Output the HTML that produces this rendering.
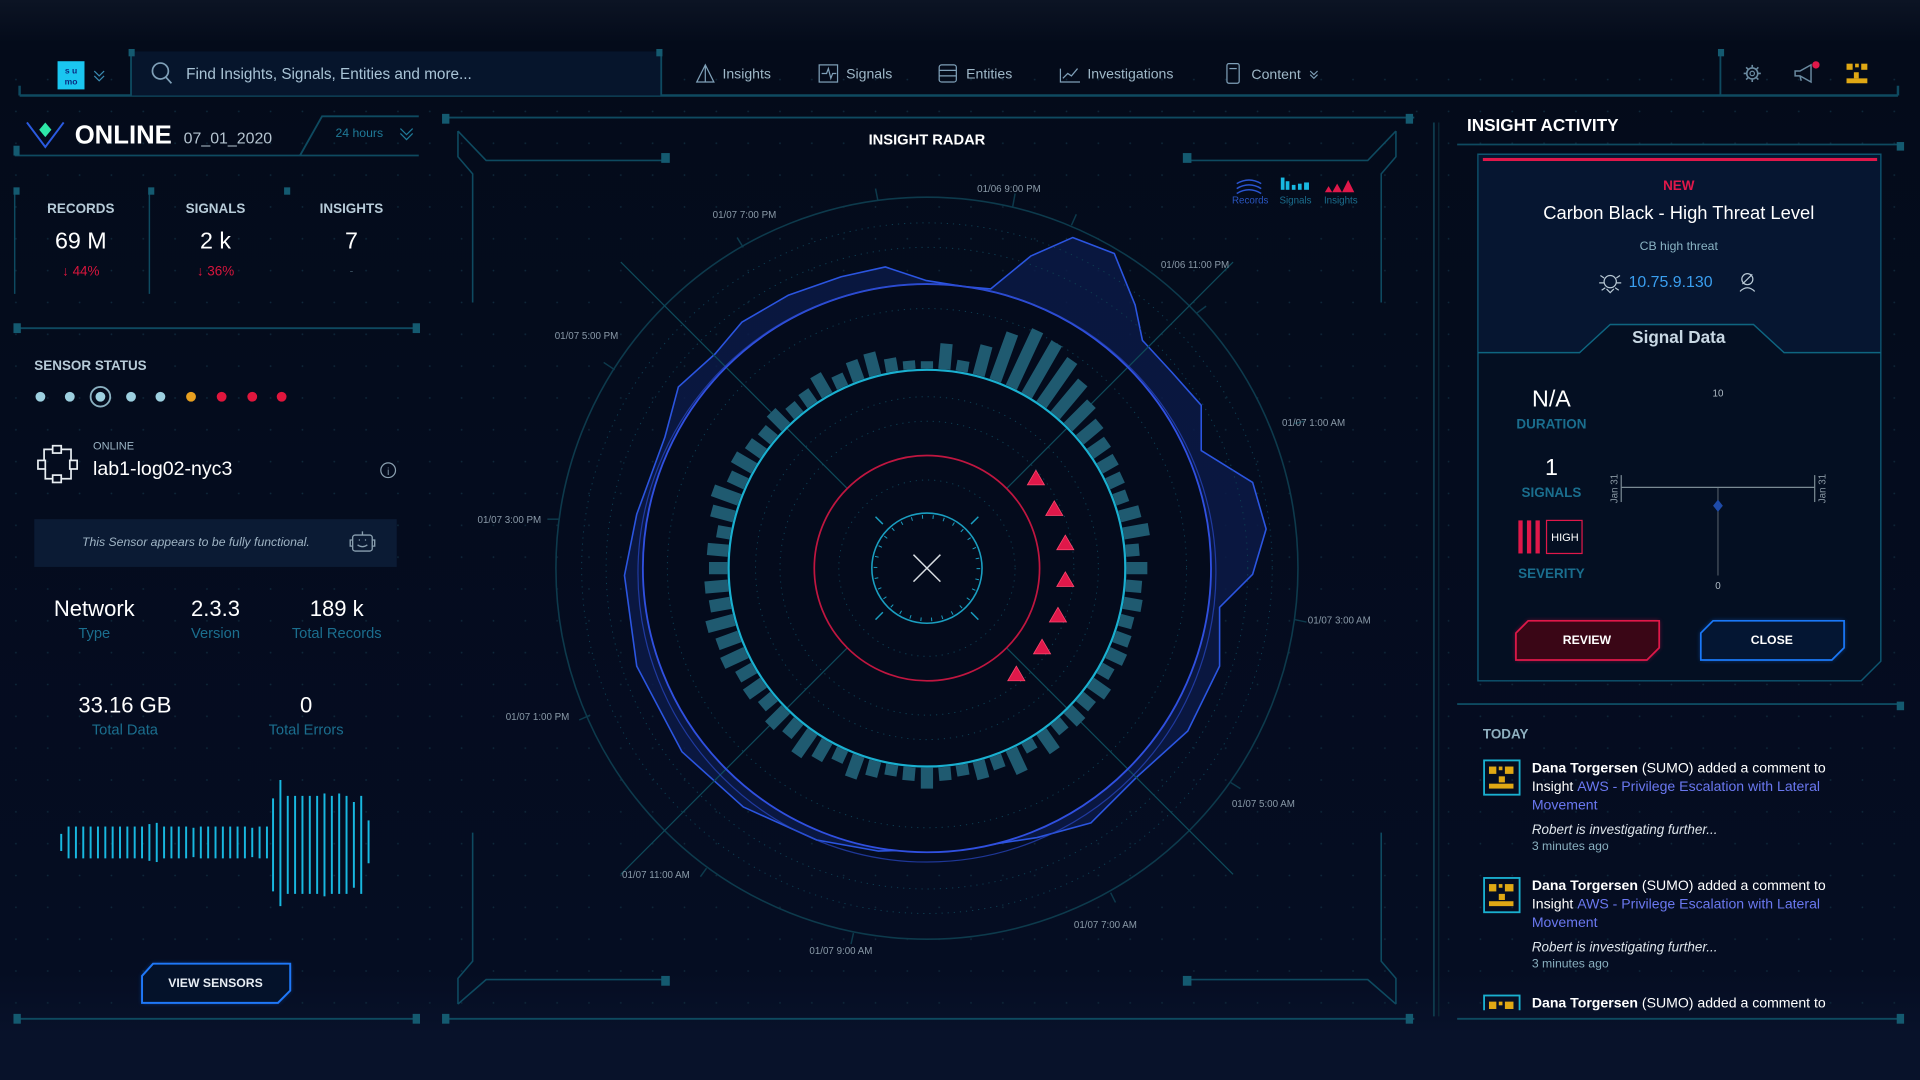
<!DOCTYPE html>
<html><head><meta charset="utf-8"><style>
html,body{margin:0;padding:0;background:#040b1c;width:1920px;height:1080px;overflow:hidden}
svg{display:block;font-family:"Liberation Sans",sans-serif}
</style></head><body>
<svg width="1920" height="1080" viewBox="0 0 1568 882" xmlns="http://www.w3.org/2000/svg">
<defs>
<pattern id="dots" width="26" height="26" patternUnits="userSpaceOnUse"><circle cx="13" cy="13" r="0.7" fill="#0f2a3c"/></pattern>
<linearGradient id="bg" x1="0" y1="0" x2="0" y2="1"><stop offset="0" stop-color="#0c1424"/><stop offset="0.04" stop-color="#040b1a"/><stop offset="0.9" stop-color="#050d22"/><stop offset="1" stop-color="#0a1530"/></linearGradient>
<linearGradient id="sev" x1="0" y1="0" x2="0" y2="1"><stop offset="0" stop-color="#e0184a"/><stop offset="1" stop-color="#e8d020"/></linearGradient>
<filter id="glow"><feGaussianBlur stdDeviation="2"/></filter>
<clipPath id="feed"><rect x="1190" y="580" width="360" height="245"/></clipPath>
</defs>
<rect width="1568" height="882" fill="url(#bg)"/>
<rect y="40" width="1568" height="800" fill="url(#dots)"/>
<rect x="0" y="848" width="1568" height="34" fill="#08122a"/>

<!-- HEADER -->
<line x1="16" y1="78" x2="1550" y2="78" stroke="#0e4a60" stroke-width="2"/>
<line x1="16" y1="70" x2="16" y2="78" stroke="#0e4a60" stroke-width="2"/>
<line x1="1550" y1="70" x2="1550" y2="78" stroke="#0e4a60" stroke-width="2"/>
<rect x="107" y="42" width="433" height="36" fill="#06152c"/>
<line x1="107" y1="42" x2="107" y2="78" stroke="#0e4a60" stroke-width="1.5"/>
<line x1="540" y1="42" x2="540" y2="78" stroke="#0e4a60" stroke-width="1.5"/>
<rect x="105" y="40" width="5" height="6" fill="#145a70"/><rect x="536" y="40" width="5" height="6" fill="#145a70"/>
<rect x="47" y="50" width="22" height="23" fill="#1ac6f0"/>
<text x="58" y="60" font-size="7" fill="#0a2a80" text-anchor="middle" font-weight="bold">s u</text>
<text x="58" y="69" font-size="7" fill="#0a2a80" text-anchor="middle" font-weight="bold">mo</text>
<path d="M77,58 l4,4 l4,-4 M77,62 l4,4 l4,-4" stroke="#3a8ab0" fill="none" stroke-width="1"/>
<circle cx="131" cy="58" r="6.5" stroke="#7fa0b8" fill="none" stroke-width="1.4"/><line x1="135.5" y1="63" x2="140" y2="68" stroke="#7fa0b8" stroke-width="1.4"/>
<text x="152" y="64.5" font-size="12.5" fill="#a9c4d6">Find Insights, Signals, Entities and more...</text>
<g fill="#9fb8c8" font-size="11.5">
<path d="M576,53 L569,67 L583,67 Z M576,53 L576,67" stroke="#7fa0b8" fill="none" stroke-width="1"/>
<text x="590" y="64">Insights</text>
<rect x="669" y="53" width="15" height="14" stroke="#7fa0b8" fill="none" stroke-width="1"/><path d="M671,60 h4 l1.5,-4 l2,8 l1.5,-4 h3" stroke="#7fa0b8" fill="none" stroke-width="1"/>
<text x="691" y="64">Signals</text>
<rect x="767" y="53" width="14" height="14" rx="2" stroke="#7fa0b8" fill="none" stroke-width="1"/><path d="M767,57.5h14M767,62h14" stroke="#7fa0b8" stroke-width="1"/>
<text x="789" y="64">Entities</text>
<path d="M866,56 v11 h16 M868,64 l4,-4 l3,2 l5,-6" stroke="#7fa0b8" fill="none" stroke-width="1"/>
<text x="888" y="64">Investigations</text>
<rect x="1002" y="52" width="10" height="16" rx="1.5" stroke="#7fa0b8" fill="none" stroke-width="1"/><line x1="1004" y1="56" x2="1010" y2="56" stroke="#7fa0b8"/>
<text x="1022" y="64.5">Content</text>
<path d="M1070,58 l3,3 l3,-3 M1070,61 l3,3 l3,-3" stroke="#7fa0b8" fill="none" stroke-width="0.9"/>
</g>
<line x1="1405" y1="42" x2="1405" y2="78" stroke="#0e4a60" stroke-width="1.5"/><rect x="1403" y="40" width="5" height="6" fill="#145a70"/>
<circle cx="1431" cy="60" r="4.5" stroke="#6a8aa0" fill="none" stroke-width="1.3"/><circle cx="1431" cy="60" r="1.8" stroke="#6a8aa0" fill="none"/>
<path d="M1431,53v2M1431,65v2M1424,60h2M1436,60h2M1426,55l1.5,1.5M1434.5,63.5l1.5,1.5M1426,65l1.5,-1.5M1434.5,56.5l1.5,-1.5" stroke="#6a8aa0" stroke-width="1.3"/>
<path d="M1466,58 h4 l9,-5 v14 l-9,-5 h-4 z M1470,62 l1,4" stroke="#6a8aa0" fill="none" stroke-width="1.2"/>
<circle cx="1483" cy="53" r="3" fill="#e0184a"/>
<g fill="#e0a814"><rect x="1508" y="52" width="5" height="5"/><rect x="1515" y="52" width="3" height="3"/><rect x="1520" y="52" width="5" height="5"/><rect x="1514" y="59" width="4" height="5"/><rect x="1508" y="64" width="17" height="4"/></g>

<!-- LEFT PANEL -->
<path d="M22,100 L37,120 L52,100" stroke="#2a5ae0" fill="none" stroke-width="1.6"/>
<path d="M37,100 L42,106 L37,112 L32,106 Z" fill="#2ee8a8"/>
<text x="61" y="117" font-size="21" font-weight="bold" fill="#fff">ONLINE</text>
<text x="150" y="117" font-size="13" fill="#b5c4d0">07_01_2020</text>
<path d="M12,127 L342,127 M245,127 L263,95 L342,95" stroke="#0e4a60" fill="none" stroke-width="1.5"/>
<rect x="11" y="119" width="5" height="8" fill="#145a70"/>
<text x="274" y="112" font-size="10" fill="#1f7a98">24 hours</text>
<path d="M327,105 l5,5 l5,-5 M327,109 l5,5 l5,-5" stroke="#1f7a98" fill="none" stroke-width="1"/>
<g stroke="#0e4a60" stroke-width="1.2"><line x1="12" y1="155" x2="12" y2="240"/><line x1="122" y1="155" x2="122" y2="240"/></g>
<g fill="#145a70"><rect x="11" y="153" width="5" height="6"/><rect x="121" y="153" width="5" height="6"/><rect x="232" y="153" width="5" height="6"/></g>
<g text-anchor="middle">
<text x="66" y="174" font-size="11" fill="#b7cbd8" font-weight="bold">RECORDS</text>
<text x="66" y="203" font-size="19" fill="#fff">69 M</text>
<text x="66" y="225" font-size="11" fill="#d8163d">↓ 44%</text>
<text x="176" y="174" font-size="11" fill="#b7cbd8" font-weight="bold">SIGNALS</text>
<text x="176" y="203" font-size="19" fill="#fff">2 k</text>
<text x="176" y="225" font-size="11" fill="#d8163d">↓ 36%</text>
<text x="287" y="174" font-size="11" fill="#b7cbd8" font-weight="bold">INSIGHTS</text>
<text x="287" y="203" font-size="19" fill="#fff">7</text>
<text x="287" y="224" font-size="9" fill="#3a5060">-</text>
</g>
<line x1="12" y1="268" x2="342" y2="268" stroke="#0e4a60" stroke-width="1.5"/>
<rect x="11" y="264" width="6" height="8" fill="#145a70"/><rect x="337" y="264" width="6" height="8" fill="#145a70"/>
<text x="28" y="302" font-size="11" fill="#b7cbd8" font-weight="bold">SENSOR STATUS</text>
<g fill="#9dd0e0"><circle cx="33" cy="324" r="4"/><circle cx="57" cy="324" r="4"/><circle cx="82" cy="324" r="4"/><circle cx="107" cy="324" r="4"/><circle cx="131" cy="324" r="4"/></g>
<circle cx="82" cy="324" r="8" stroke="#8ab0c0" fill="none" stroke-width="1.5"/>
<circle cx="156" cy="324" r="4" fill="#e8a020"/>
<g fill="#e0163d"><circle cx="181" cy="324" r="4"/><circle cx="206" cy="324" r="4"/><circle cx="230" cy="324" r="4"/></g>
<g stroke="#e8eef2" fill="none" stroke-width="1.4">
<rect x="43" y="364" width="7" height="6"/><rect x="43" y="388" width="7" height="6"/><rect x="31" y="376" width="6" height="7"/><rect x="57" y="376" width="6" height="7"/>
<path d="M43,367 h-7 v9 M50,367 h8 v9 M37,383 v8 h6 M58,383 v8 h-8"/></g>
<text x="76" y="367" font-size="9" fill="#9bb4c4">ONLINE</text>
<text x="76" y="388" font-size="16" fill="#fff">lab1-log02-nyc3</text>
<circle cx="317" cy="384" r="6" stroke="#8aa0b0" fill="none" stroke-width="1"/><text x="317" y="388" font-size="8" fill="#8aa0b0" text-anchor="middle">i</text>
<rect x="28" y="424" width="296" height="39" fill="#0b1b34"/>
<text x="160" y="446" font-size="10" fill="#9fb4c4" font-style="italic" text-anchor="middle">This Sensor appears to be fully functional.</text>
<g stroke="#8aa0b0" fill="none" stroke-width="1.1"><rect x="288" y="437" width="16" height="13" rx="2"/><path d="M292,445 q4,3 8,0 M293,441h1M298,441h1 M296,437v-3 M288,441h-2v5h2 M304,441h2v5h-2"/></g>
<g text-anchor="middle">
<text x="77" y="503" font-size="18" fill="#fff">Network</text><text x="77" y="521" font-size="12" fill="#1b6e8e">Type</text>
<text x="176" y="503" font-size="18" fill="#fff">2.3.3</text><text x="176" y="521" font-size="12" fill="#1b6e8e">Version</text>
<text x="275" y="503" font-size="18" fill="#fff">189 k</text><text x="275" y="521" font-size="12" fill="#1b6e8e">Total Records</text>
<text x="102" y="582" font-size="18" fill="#fff">33.16 GB</text><text x="102" y="600" font-size="12" fill="#1b6e8e">Total Data</text>
<text x="250" y="582" font-size="18" fill="#fff">0</text><text x="250" y="600" font-size="12" fill="#1b6e8e">Total Errors</text>
</g>
<g stroke="#18b8e0" stroke-width="1.6">
<line x1="50" y1="681" x2="50" y2="695"/><line x1="56" y1="675" x2="56" y2="701"/><line x1="62" y1="675" x2="62" y2="701"/><line x1="68" y1="675" x2="68" y2="701"/><line x1="74" y1="675" x2="74" y2="701"/><line x1="80" y1="675" x2="80" y2="701"/><line x1="86" y1="675" x2="86" y2="701"/><line x1="92" y1="675" x2="92" y2="701"/><line x1="98" y1="675" x2="98" y2="701"/><line x1="104" y1="675" x2="104" y2="701"/><line x1="110" y1="675" x2="110" y2="701"/><line x1="116" y1="675" x2="116" y2="701"/><line x1="122" y1="673" x2="122" y2="703"/><line x1="128" y1="672" x2="128" y2="704"/><line x1="134" y1="675" x2="134" y2="701"/><line x1="140" y1="675" x2="140" y2="701"/><line x1="146" y1="675" x2="146" y2="701"/><line x1="152" y1="675" x2="152" y2="701"/><line x1="158" y1="676" x2="158" y2="700"/><line x1="164" y1="675" x2="164" y2="701"/><line x1="170" y1="675" x2="170" y2="701"/><line x1="176" y1="675" x2="176" y2="701"/><line x1="182" y1="675" x2="182" y2="701"/><line x1="188" y1="675" x2="188" y2="701"/><line x1="194" y1="675" x2="194" y2="701"/><line x1="200" y1="675" x2="200" y2="701"/><line x1="206" y1="676" x2="206" y2="700"/><line x1="212" y1="675" x2="212" y2="701"/><line x1="218" y1="675" x2="218" y2="701"/>
<line x1="223" y1="652" x2="223" y2="728"/><line x1="229" y1="637" x2="229" y2="740"/><line x1="235" y1="650" x2="235" y2="730"/><line x1="241" y1="650" x2="241" y2="730"/><line x1="247" y1="650" x2="247" y2="730"/><line x1="253" y1="650" x2="253" y2="730"/><line x1="259" y1="650" x2="259" y2="730"/><line x1="265" y1="648" x2="265" y2="732"/><line x1="271" y1="650" x2="271" y2="730"/><line x1="277" y1="648" x2="277" y2="730"/><line x1="283" y1="650" x2="283" y2="730"/><line x1="289" y1="655" x2="289" y2="725"/><line x1="295" y1="650" x2="295" y2="730"/><line x1="301" y1="670" x2="301" y2="705"/>
</g>
<path d="M125,787 L237,787 L237,809 L227,819 L116,819 L116,797 Z" fill="#1f6cf0" opacity="0.5" filter="url(#glow)"/>
<path d="M125,787 L237,787 L237,809 L227,819 L116,819 L116,797 Z" fill="#04122a" stroke="#1f78f8" stroke-width="1.6"/>
<text x="176" y="806" font-size="10" fill="#e8eef4" text-anchor="middle" font-weight="bold">VIEW SENSORS</text>
<line x1="12" y1="832" x2="342" y2="832" stroke="#0e4a60" stroke-width="1.5"/>
<rect x="11" y="828" width="6" height="8" fill="#145a70"/><rect x="337" y="828" width="6" height="8" fill="#145a70"/>

<!-- CENTER PANEL -->
<line x1="362" y1="96" x2="1155" y2="96" stroke="#0e4a60" stroke-width="1.5"/>
<rect x="361" y="93" width="6" height="8" fill="#145a70"/><rect x="1148" y="93" width="6" height="8" fill="#145a70"/>
<line x1="362" y1="832" x2="1155" y2="832" stroke="#0e4a60" stroke-width="1.5"/>
<rect x="361" y="828" width="6" height="8" fill="#145a70"/><rect x="1148" y="828" width="6" height="8" fill="#145a70"/>
<g stroke="#0e4a60" fill="none" stroke-width="1.3">
<path d="M374,107 L374,128 L386,142 L386,247 M374,107 L397,131 L545,131"/>
<path d="M1140,107 L1140,128 L1128,142 L1128,247 M1140,107 L1117,131 L969,131"/>
<path d="M374,820 L374,799 L386,785 L386,680 M374,820 L397,800 L545,800"/>
<path d="M1140,820 L1140,799 L1128,785 L1128,680 M1140,820 L1117,800 L969,800"/>
</g>
<g fill="#145a70"><rect x="540" y="125" width="7" height="8"/><rect x="966" y="125" width="7" height="8"/><rect x="540" y="797" width="7" height="8"/><rect x="966" y="797" width="7" height="8"/></g>
<text x="757" y="118" font-size="12" font-weight="bold" fill="#fff" text-anchor="middle">INSIGHT RADAR</text>
<path d="M1010,150 q10,-6 20,0 M1010,154 q10,-6 20,0 M1010,158 q10,-6 20,0" stroke="#2a55d0" fill="none" stroke-width="1.2"/>
<g fill="#18b8e0"><rect x="1046" y="145" width="3" height="10"/><rect x="1050" y="148" width="3" height="7"/><rect x="1055" y="151" width="3" height="4"/><rect x="1060" y="150" width="3" height="5"/><rect x="1065" y="149" width="4" height="6"/></g>
<g fill="#e0184a"><path d="M1082,157 l3,-5 l3,5z M1088,157 l4,-7 l4,7z M1096,157 l5,-10 l5,10z"/></g>
<g font-size="8" fill="#1b6e8e" text-anchor="middle"><text x="1021" y="166" fill="#2a55c0">Records</text><text x="1058" y="166">Signals</text><text x="1095" y="166">Insights</text></g>

<g transform="translate(757,464)">
<circle r="303" stroke="#0d3a4c" fill="none" stroke-width="1.3"/>
<path d="M-34,-246 L-1,-235 L30,-230 L52,-228 L85,-255 L119,-270 L153,-257 L170,-215 L176,-186 L200,-160 L224,-133 L224,-96 L266,-70 L277,-32 L266,5 L239,32 L239,80 L213,133 L172,170 L134,208 L90,220 L44,227 L0,230 L-40,231 L-90,222 L-150,195 L-200,150 L-237,80 L-247,6 L-237,-44 L-214,-107 L-203,-148 L-173,-175 L-151,-201 L-113,-223 L-70,-238 Z" fill="#0b1a48" fill-opacity="0.8" stroke="#2b55e0" stroke-width="1.3" stroke-linejoin="round"/>
<circle r="232" fill="#040b1c"/>
<g stroke="#0e3e52" fill="none" stroke-width="0.8" stroke-dasharray="1 4">
<circle r="282"/><circle r="262"/><circle r="212"/><circle r="140"/><circle r="120"/><circle r="72"/>
</g>
<g stroke="#0e4a5a" stroke-width="1">
<line x1="65" y1="-65" x2="250" y2="-250"/><line x1="-65" y1="-65" x2="-250" y2="-250"/><line x1="65" y1="65" x2="250" y2="250"/><line x1="-65" y1="65" x2="-250" y2="250"/>
</g>
<g stroke="#0d3a4c" stroke-width="1.2">
<line x1="-40" y1="-300" x2="-42" y2="-310"/><line x1="70" y1="-295" x2="72" y2="-306"/><line x1="118" y1="-280" x2="122" y2="-289"/><line x1="-150" y1="-262" x2="-155" y2="-270"/><line x1="220" y1="-208" x2="228" y2="-214"/><line x1="300" y1="-118" x2="308" y2="-120"/><line x1="-255" y1="-162" x2="-264" y2="-168"/><line x1="300" y1="42" x2="310" y2="44"/><line x1="-300" y1="-40" x2="-310" y2="-40"/><line x1="248" y1="175" x2="256" y2="180"/><line x1="-275" y1="120" x2="-284" y2="124"/><line x1="150" y1="265" x2="154" y2="273"/><line x1="-180" y1="245" x2="-185" y2="252"/><line x1="-60" y1="298" x2="-62" y2="307"/></g>
<circle r="232" stroke="#3050e0" fill="none" stroke-width="1.5"/>
<circle cx="0" cy="4" r="236" stroke="#2a48c8" fill="none" stroke-width="1" opacity="0.7"/>
<g stroke="#1f5a70" stroke-width="10">
<line y1="-163" y2="-169" transform="rotate(0)"/><line y1="-163" y2="-184" transform="rotate(5)"/><line y1="-163" y2="-172" transform="rotate(10)"/><line y1="-163" y2="-188" transform="rotate(15)"/><line y1="-163" y2="-204" transform="rotate(20)"/><line y1="-163" y2="-214" transform="rotate(25)"/><line y1="-163" y2="-212" transform="rotate(30)"/><line y1="-163" y2="-207" transform="rotate(35)"/><line y1="-163" y2="-198" transform="rotate(40)"/><line y1="-163" y2="-190" transform="rotate(45)"/><line y1="-163" y2="-184" transform="rotate(50)"/><line y1="-163" y2="-180" transform="rotate(55)"/><line y1="-163" y2="-178" transform="rotate(60)"/><line y1="-163" y2="-176" transform="rotate(65)"/><line y1="-163" y2="-174" transform="rotate(70)"/><line y1="-163" y2="-180" transform="rotate(75)"/><line y1="-163" y2="-184" transform="rotate(80)"/><line y1="-163" y2="-174" transform="rotate(85)"/><line y1="-163" y2="-180" transform="rotate(90)"/><line y1="-163" y2="-176" transform="rotate(95)"/><line y1="-163" y2="-178" transform="rotate(100)"/><line y1="-163" y2="-174" transform="rotate(105)"/><line y1="-163" y2="-176" transform="rotate(110)"/><line y1="-163" y2="-178" transform="rotate(115)"/><line y1="-163" y2="-174" transform="rotate(120)"/><line y1="-163" y2="-180" transform="rotate(125)"/><line y1="-163" y2="-176" transform="rotate(130)"/><line y1="-163" y2="-178" transform="rotate(135)"/><line y1="-163" y2="-174" transform="rotate(140)"/><line y1="-163" y2="-182" transform="rotate(145)"/><line y1="-163" y2="-172" transform="rotate(150)"/><line y1="-163" y2="-184" transform="rotate(155)"/><line y1="-163" y2="-174" transform="rotate(160)"/><line y1="-163" y2="-178" transform="rotate(165)"/><line y1="-163" y2="-172" transform="rotate(170)"/><line y1="-163" y2="-174" transform="rotate(175)"/><line y1="-163" y2="-180" transform="rotate(180)"/><line y1="-163" y2="-174" transform="rotate(185)"/><line y1="-163" y2="-172" transform="rotate(190)"/><line y1="-163" y2="-176" transform="rotate(195)"/><line y1="-163" y2="-182" transform="rotate(200)"/><line y1="-163" y2="-174" transform="rotate(205)"/><line y1="-163" y2="-180" transform="rotate(210)"/><line y1="-163" y2="-186" transform="rotate(215)"/><line y1="-163" y2="-178" transform="rotate(220)"/><line y1="-163" y2="-182" transform="rotate(225)"/><line y1="-163" y2="-176" transform="rotate(230)"/><line y1="-163" y2="-180" transform="rotate(235)"/><line y1="-163" y2="-178" transform="rotate(240)"/><line y1="-163" y2="-184" transform="rotate(245)"/><line y1="-163" y2="-182" transform="rotate(250)"/><line y1="-163" y2="-186" transform="rotate(255)"/><line y1="-163" y2="-180" transform="rotate(260)"/><line y1="-163" y2="-182" transform="rotate(265)"/><line y1="-163" y2="-178" transform="rotate(270)"/><line y1="-163" y2="-180" transform="rotate(275)"/><line y1="-163" y2="-174" transform="rotate(280)"/><line y1="-163" y2="-182" transform="rotate(285)"/><line y1="-163" y2="-186" transform="rotate(290)"/><line y1="-163" y2="-178" transform="rotate(295)"/><line y1="-163" y2="-182" transform="rotate(300)"/><line y1="-163" y2="-178" transform="rotate(305)"/><line y1="-163" y2="-176" transform="rotate(310)"/><line y1="-163" y2="-180" transform="rotate(315)"/><line y1="-163" y2="-174" transform="rotate(320)"/><line y1="-163" y2="-176" transform="rotate(325)"/><line y1="-163" y2="-182" transform="rotate(330)"/><line y1="-163" y2="-174" transform="rotate(335)"/><line y1="-163" y2="-180" transform="rotate(340)"/><line y1="-163" y2="-182" transform="rotate(345)"/><line y1="-163" y2="-174" transform="rotate(350)"/><line y1="-163" y2="-170" transform="rotate(355)"/>
</g>
<circle r="162" stroke="#1ab0d0" fill="none" stroke-width="1.8"/>
<circle r="92" stroke="#c01640" fill="none" stroke-width="1.4"/>
<g stroke="#1a9ec0" stroke-width="1.2"><line x1="36" y1="-36" x2="42" y2="-42"/><line x1="-36" y1="-36" x2="-42" y2="-42"/><line x1="36" y1="36" x2="42" y2="42"/><line x1="-36" y1="36" x2="-42" y2="42"/></g>
<circle r="45" stroke="#1a9ec0" fill="none" stroke-width="1.3"/>
<circle r="42" stroke="#1a9ec0" fill="none" stroke-width="3" stroke-dasharray="0.8 8"/>
<path d="M-11,-11 L11,11 M11,-11 L-11,11" stroke="#d8dde2" stroke-width="1.2"/>
</g>
<g fill="#e0184a" stroke="#ff4a70" stroke-width="0.6">
<path d="M846,384 l7,12 h-14z"/><path d="M861,409 l7,12 h-14z"/><path d="M870,437 l7,12 h-14z"/><path d="M870,467 l7,12 h-14z"/><path d="M864,496 l7,12 h-14z"/><path d="M851,522 l7,12 h-14z"/><path d="M830,544 l7,12 h-14z"/>
</g>
<g font-size="8" fill="#8a9aa8">
<text x="798" y="157">01/06 9:00 PM</text><text x="582" y="178">01/07 7:00 PM</text><text x="948" y="219">01/06 11:00 PM</text><text x="453" y="277">01/07 5:00 PM</text><text x="1047" y="348">01/07 1:00 AM</text><text x="390" y="427">01/07 3:00 PM</text><text x="1068" y="509">01/07 3:00 AM</text><text x="413" y="588">01/07 1:00 PM</text><text x="1006" y="659">01/07 5:00 AM</text><text x="508" y="717">01/07 11:00 AM</text><text x="877" y="758">01/07 7:00 AM</text><text x="661" y="779">01/07 9:00 AM</text>
</g>
<line x1="1171" y1="100" x2="1171" y2="830" stroke="#0e3a4c" stroke-width="1.5"/>
<line x1="1175" y1="100" x2="1175" y2="830" stroke="#0b2a38" stroke-width="1"/>

<!-- RIGHT PANEL -->
<text x="1198" y="107" font-size="14" font-weight="bold" fill="#fff">INSIGHT ACTIVITY</text>
<line x1="1190" y1="118" x2="1550" y2="118" stroke="#0e4a60" stroke-width="1.5"/><rect x="1549" y="116" width="6" height="7" fill="#145a70"/>
<path d="M1207,126 H1536 V540 L1520,556 H1207 Z" fill="#040f22" stroke="#0e5570" stroke-width="1.2"/>
<path d="M1207.6,126.6 H1535.4 V288 H1207.6 Z" fill="#061631"/>
<rect x="1211" y="129" width="322" height="2.5" fill="#e0184a"/>
<g text-anchor="middle">
<text x="1371" y="155" font-size="11" fill="#e0184a" font-weight="bold">NEW</text>
<text x="1371" y="179" font-size="15" fill="#fff">Carbon Black - High Threat Level</text>
<text x="1371" y="204" font-size="10" fill="#8ab4c4">CB high threat</text>
</g>
<g stroke="#b8c8d4" fill="none" stroke-width="1"><circle cx="1315" cy="230" r="5"/><path d="M1307,225 l3,2 M1323,225 l-3,2 M1306,231 h4 M1320,231 h4 M1308,237 l3,-2 M1322,237 l-3,-2 M1312,236 l3,3 l3,-3"/></g>
<text x="1330" y="234.5" font-size="13" fill="#3a9ff0">10.75.9.130</text>
<g stroke="#b8c8d4" fill="none" stroke-width="1"><circle cx="1427" cy="228" r="4.5"/><path d="M1423,232 l8,-8 M1421,238 q6,-6 12,0"/></g>
<path d="M1207,288 H1290 L1315,265 H1432 L1457,288 H1536" fill="none" stroke="#0e6580" stroke-width="1.2"/>
<path d="M1291,288 L1315,266 H1432 L1456,288 Z" fill="#040f22"/>
<text x="1371" y="280" font-size="14" font-weight="bold" fill="#c8d8e4" text-anchor="middle">Signal Data</text>
<g text-anchor="middle">
<text x="1267" y="332" font-size="19" fill="#fff">N/A</text><text x="1267" y="350" font-size="11" fill="#1a6e8e" font-weight="bold">DURATION</text>
<text x="1267" y="388" font-size="19" fill="#fff">1</text><text x="1267" y="406" font-size="11" fill="#1a6e8e" font-weight="bold">SIGNALS</text>
<text x="1267" y="472" font-size="11" fill="#1a6e8e" font-weight="bold">SEVERITY</text>
</g>
<g fill="#e0184a"><rect x="1240" y="425" width="3.5" height="27"/><rect x="1247" y="425" width="3.5" height="27"/><rect x="1254" y="425" width="3.5" height="27"/></g>
<rect x="1263" y="425" width="29" height="27" fill="none" stroke="#e0184a" stroke-width="1"/>
<text x="1278" y="442" font-size="9" fill="#fff" text-anchor="middle">HIGH</text>
<line x1="1403" y1="328" x2="1403" y2="398" stroke="url(#sev)" stroke-width="1.2"/>
<line x1="1403" y1="398" x2="1403" y2="470" stroke="#4a5560" stroke-width="1"/>
<line x1="1324" y1="398" x2="1482" y2="398" stroke="#7a8a94" stroke-width="1"/>
<line x1="1324" y1="388" x2="1324" y2="410" stroke="#7a8a94"/><line x1="1482" y1="388" x2="1482" y2="410" stroke="#7a8a94"/>
<text x="1403" y="324" font-size="8" fill="#b0bcc6" text-anchor="middle">10</text>
<text x="1403" y="481" font-size="8" fill="#b0bcc6" text-anchor="middle">0</text>
<text transform="translate(1321,399) rotate(-90)" font-size="8" fill="#8a98a4" text-anchor="middle">Jan 31</text>
<text transform="translate(1491,399) rotate(-90)" font-size="8" fill="#8a98a4" text-anchor="middle">Jan 31</text>
<path d="M1403,408 l4,5 l-4,5 l-4,-5z" fill="#1e4aa8"/>
<path d="M1248,507 H1355 V529 L1345,539 H1238 V517 Z" fill="#e0184a" opacity="0.6" filter="url(#glow)"/>
<path d="M1248,507 H1355 V529 L1345,539 H1238 V517 Z" fill="#3a0616" stroke="#e0184a" stroke-width="1.4"/>
<text x="1296" y="526" font-size="10" fill="#fff" text-anchor="middle" font-weight="bold">REVIEW</text>
<path d="M1399,507 H1506 V529 L1496,539 H1389 V517 Z" fill="#1a70f0" opacity="0.6" filter="url(#glow)"/>
<path d="M1399,507 H1506 V529 L1496,539 H1389 V517 Z" fill="#041633" stroke="#1a78f8" stroke-width="1.4"/>
<text x="1447" y="526" font-size="10" fill="#fff" text-anchor="middle" font-weight="bold">CLOSE</text>
<line x1="1190" y1="575" x2="1550" y2="575" stroke="#0e4a60" stroke-width="1.5"/><rect x="1549" y="573" width="6" height="7" fill="#145a70"/>
<text x="1211" y="603" font-size="11" fill="#8fb0c0" font-weight="bold">TODAY</text>
<g clip-path="url(#feed)">
<g id="e1">
<rect x="1212" y="621" width="29" height="28" fill="none" stroke="#1ab0d0" stroke-width="1.5"/>
<g fill="#e0a814"><rect x="1216" y="626" width="6" height="6"/><rect x="1224" y="626" width="3" height="3"/><rect x="1229" y="626" width="7" height="6"/><rect x="1224" y="634" width="5" height="5"/><rect x="1216" y="640" width="20" height="4"/></g>
<text x="1251" y="631" font-size="11.5" fill="#fff"><tspan font-weight="bold">Dana Torgersen</tspan> (SUMO) added a comment to</text>
<text x="1251" y="646" font-size="11.5" fill="#fff">Insight <tspan fill="#6a78f0">AWS - Privilege Escalation with Lateral</tspan></text>
<text x="1251" y="661" font-size="11.5" fill="#6a78f0">Movement</text>
<text x="1251" y="681" font-size="11" fill="#dde4ea" font-style="italic">Robert is investigating further...</text>
<text x="1251" y="694" font-size="10" fill="#8ab0c0">3 minutes ago</text>
</g>
<use href="#e1" y="96"/>
<use href="#e1" y="192"/>
</g>
<line x1="1190" y1="832" x2="1550" y2="832" stroke="#0e4a60" stroke-width="1.5"/><rect x="1549" y="828" width="6" height="8" fill="#145a70"/>
</svg>
</body></html>
